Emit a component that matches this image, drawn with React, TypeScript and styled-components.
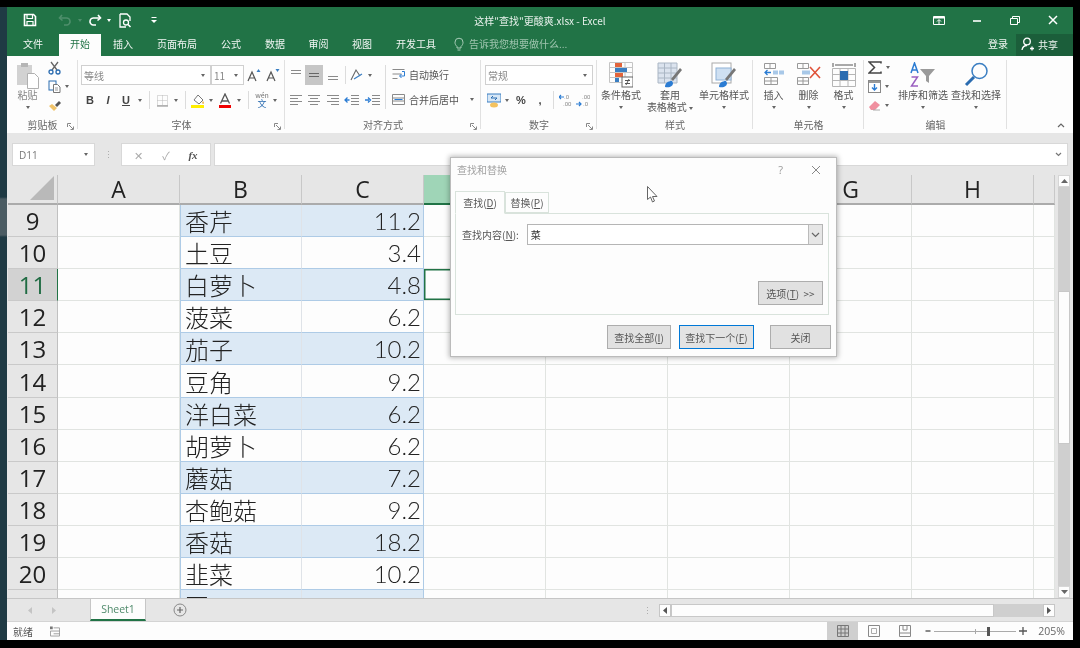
import { FC, ReactNode } from "react";
import styled, { createGlobalStyle } from "styled-components";

const FONT = `"Noto Sans CJK SC", "Liberation Sans", sans-serif`;
const LATIN = `"Open Sans", "Noto Sans CJK SC", sans-serif`;
const GREEN = "#217346";

const Global = createGlobalStyle`
  html, body { margin: 0; padding: 0; background: #000; }
  body { width: 1080px; height: 648px; overflow: hidden; font-family: ${FONT}; }
  * { box-sizing: border-box; }
`;

/* ---------- frame ---------- */
const Frame = styled.div`
  display: flex;
  width: 1080px;
  height: 648px;
  padding: 7px 7px 8px 0;
  background: #000;
`;
const LeftStrip = styled.div`
  width: 7px;
  background: linear-gradient(#1f3a44 0 190px, #4b5c63 192px 228px, #1f3a44 230px);
`;
const Excel = styled.div`
  position: relative;
  flex: 1;
  display: flex;
  flex-direction: column;
  background: #e6e6e6;
  overflow: hidden;
  filter: blur(0.3px);
`;

/* ---------- title bar ---------- */
const TitleBar = styled.div`
  height: 26px;
  flex: none;
  display: grid;
  grid-template-columns: 1fr auto 1fr;
  align-items: center;
  background: ${GREEN};
  color: #e8f1ec;
`;
const Qat = styled.div`
  display: flex;
  align-items: center;
  padding-left: 14px;
`;
const QatSlot = styled.div<{ $w: number }>`
  width: ${(p) => p.$w}px;
  display: flex;
  align-items: center;
  justify-content: center;
`;
const TitleText = styled.div`
  font-size: 10px;
`;
const WindowButtons = styled.div`
  display: flex;
  justify-content: flex-end;
  align-items: center;
  padding-right: 1px;
`;
const WinBtn = styled.div<{ $w: number }>`
  width: ${(p) => p.$w}px;
  display: flex;
  justify-content: center;
`;

/* ---------- tab bar ---------- */
const TabBar = styled.div`
  height: 23px;
  flex: none;
  display: flex;
  align-items: stretch;
  background: ${GREEN};
  padding-top: 1px;
`;
const RibbonTab = styled.div<{ $active?: boolean; $w: number }>`
  width: ${(p) => p.$w}px;
  padding-bottom: 3px;
  display: flex;
  align-items: center;
  justify-content: center;
  font-size: 10px;
  color: ${(p) => (p.$active ? GREEN : "#f1f6f3")};
  background: ${(p) => (p.$active ? "#fdfdfd" : "transparent")};
`;
const TellMe = styled.div`
  display: flex;
  align-items: center;
  gap: 5px;
  margin-left: 6px;
  padding-bottom: 3px;
  font-size: 10px;
  color: #9fc5af;
`;
const Spacer = styled.div`
  flex: 1;
`;
const Login = styled.div`
  display: flex;
  align-items: center;
  margin-right: 8px;
  padding-bottom: 3px;
  font-size: 10px;
  color: #f1f6f3;
`;
const Share = styled.div`
  width: 57px;
  display: flex;
  align-items: center;
  gap: 3px;
  padding: 0 0 2px 5px;
  font-size: 10px;
  color: #f1f6f3;
  background: #1b5e3a;
`;

/* ---------- ribbon ---------- */
const Ribbon = styled.div`
  position: relative;
  height: 77px;
  flex: none;
  display: flex;
  background: #fdfdfd;
  color: #555;
`;
const Group = styled.div<{ $w: number }>`
  position: relative;
  width: ${(p) => p.$w}px;
  flex: none;
  display: flex;
  flex-direction: column;
  &::after {
    content: "";
    position: absolute;
    right: 0;
    top: 4px;
    bottom: 4px;
    width: 1px;
    background: #e1e1e1;
  }
`;
const GroupBody = styled.div<{ $pl?: number; $col?: boolean }>`
  flex: 1;
  min-height: 0;
  display: flex;
  flex-direction: ${(p) => (p.$col ? "column" : "row")};
  padding: ${(p) => (p.$col ? "9px" : "6px")} 0 0 ${(p) => p.$pl ?? 0}px;
  ${(p) => p.$col && "gap: 5px;"}
`;
const GroupLabel = styled.div`
  height: 15px;
  flex: none;
  line-height: 13px;
  text-align: center;
  font-size: 10px;
  color: #666;
`;
const Launcher = styled.svg`
  position: absolute;
  right: 4px;
  bottom: 3px;
`;
const Row = styled.div`
  height: 20px;
  display: flex;
  align-items: center;
`;
const Slot = styled.div<{ $w?: number; $on?: boolean }>`
  width: ${(p) => p.$w ?? 18}px;
  height: 20px;
  flex: none;
  display: flex;
  align-items: center;
  justify-content: center;
  font-size: 10px;
  background: ${(p) => (p.$on ? "#c6c6c6" : "transparent")};
`;
const StyleLetter = styled.span<{ $i?: boolean; $u?: boolean }>`
  font-family: "Liberation Sans", sans-serif;
  font-size: 11px;
  font-weight: 700;
  font-style: ${(p) => (p.$i ? "italic" : "normal")};
  text-decoration: ${(p) => (p.$u ? "underline" : "none")};
  color: #444;
`;
const Sep = styled.div<{ $w: number }>`
  width: ${(p) => p.$w}px;
  height: 18px;
  flex: none;
  display: flex;
  justify-content: center;
  &::before {
    content: "";
    width: 1px;
    background: #dcdcdc;
  }
`;
const Combo = styled.div<{ $w: number }>`
  width: ${(p) => p.$w}px;
  height: 20px;
  flex: none;
  display: flex;
  align-items: center;
  justify-content: space-between;
  padding: 0 5px 0 2px;
  border: 1px solid #d0d0d0;
  font-size: 10px;
  color: #888;
  background: #fff;
`;
const Caret = styled.i<{ $c?: string }>`
  display: block;
  width: 0;
  height: 0;
  border: 2.5px solid transparent;
  border-top: 3px solid ${(p) => p.$c ?? "#666"};
  border-bottom: 0;
  flex: none;
`;
const InlineCaret = styled(Caret)`
  display: inline-block;
  vertical-align: middle;
`;
const CaretSlot = styled.div<{ $w?: number }>`
  width: ${(p) => p.$w ?? 8}px;
  flex: none;
  display: flex;
  justify-content: center;
`;
const SmallStack = styled.div<{ $w: number }>`
  width: ${(p) => p.$w}px;
  flex: none;
  margin-top: -4px;
  display: flex;
  flex-direction: column;
`;
const ClipItem = styled.div`
  height: 19px;
  display: flex;
  align-items: center;
  gap: 4px;
`;
const Big = styled.div<{ $w: number }>`
  width: ${(p) => p.$w}px;
  flex: none;
  display: flex;
  flex-direction: column;
  align-items: center;
  font-size: 10px;
  line-height: 12px;
  color: #555;
  white-space: nowrap;
`;
const BigIcon = styled.div`
  height: 27px;
  display: flex;
  align-items: flex-start;
  justify-content: center;
`;
const BigCaret = styled.div`
  height: 12px;
  display: flex;
  align-items: center;
`;
const PasteLabel = styled.span`
  color: #888;
`;
const LongBtn = styled.div`
  display: flex;
  align-items: center;
  gap: 4px;
  height: 20px;
  font-size: 10px;
  color: #555;
  white-space: nowrap;
`;
const AlignBody = styled.div`
  flex: 1;
  min-height: 0;
  display: flex;
  padding: 9px 0 0 2px;
`;
const AlignRight = styled.div`
  display: flex;
  flex-direction: column;
  gap: 5px;
  margin-top: -1px;
  padding-left: 6px;
`;
const AlignLeft = styled.div`
  display: flex;
  flex-direction: column;
  gap: 5px;
  width: 102px;
  border-right: 1px solid #dcdcdc;
  height: 44px;
`;
const Collapse = styled.svg`
  position: absolute;
  right: 8px;
  bottom: 5px;
`;

/* ---------- formula bar ---------- */
const FormulaBar = styled.div`
  height: 42px;
  flex: none;
  display: flex;
  align-items: flex-start;
  padding: 10px 5px 0 5px;
`;
const NameBox = styled.div`
  width: 83px;
  height: 23px;
  display: flex;
  align-items: center;
  justify-content: space-between;
  padding: 0 6px;
  background: #fff;
  border: 1px solid #d8d8d8;
  font-family: ${LATIN};
  font-size: 10px;
  color: #777;
`;
const Grip = styled.div`
  width: 26px;
  height: 23px;
  display: flex;
  align-items: center;
  justify-content: center;
  color: #aaa;
  font-size: 9px;
  line-height: 4px;
`;
const FxBox = styled.div`
  width: 90px;
  height: 23px;
  display: flex;
  align-items: center;
  justify-content: space-around;
  padding: 0 3px;
  margin-right: 3px;
  background: #fff;
  border: 1px solid #d8d8d8;
  color: #aaa;
  font-size: 11px;
`;
const FxText = styled.span`
  font-family: "Liberation Serif", serif;
  font-style: italic;
  font-weight: 700;
  color: #555;
`;
const FormulaInput = styled.div`
  flex: 1;
  height: 23px;
  display: flex;
  align-items: center;
  justify-content: flex-end;
  padding-right: 5px;
  background: #fff;
  border: 1px solid #d8d8d8;
`;

/* ---------- sheet ---------- */
const SheetArea = styled.div`
  flex: 1;
  min-height: 0;
  display: flex;
  padding-left: 1px;
`;
const SheetGrid = styled.div`
  width: 1047px;
  display: grid;
  grid-template-columns: 50px repeat(8, 122px) 21px;
  grid-template-rows: 30px;
  grid-auto-rows: 32.1px;
  overflow: hidden;
  align-content: start;
`;
const Corner = styled.div`
  display: flex;
  align-items: flex-end;
  justify-content: flex-end;
  padding: 0 3px 3px 0;
  background: #e6e6e6;
  border-right: 1px solid #c4c4c4;
  border-bottom: 2px solid #ababab;
`;
const ColHead = styled.div<{ $sel?: boolean }>`
  display: flex;
  align-items: center;
  justify-content: center;
  font-family: ${LATIN};
  font-size: 23px;
  color: #222;
  background: ${(p) => (p.$sel ? "#9fd5b7" : "#e6e6e6")};
  border-right: 1px solid #c8c8c8;
  border-bottom: 2px solid ${(p) => (p.$sel ? GREEN : "#ababab")};
`;
const RowHead = styled.div<{ $sel?: boolean }>`
  display: flex;
  align-items: center;
  justify-content: center;
  font-family: ${LATIN};
  font-size: 24px;
  color: ${(p) => (p.$sel ? "#1f6b42" : "#222")};
  background: ${(p) => (p.$sel ? "#d2d2d2" : "#e6e6e6")};
  border-bottom: 1px solid #c9c9c9;
  border-right: ${(p) => (p.$sel ? `1px solid ${GREEN}` : "1px solid #c0c0c0")};
`;
const Cell = styled.div<{ $blue?: boolean; $table?: boolean; $num?: boolean; $sel?: boolean }>`
  display: flex;
  align-items: center;
  justify-content: ${(p) => (p.$num ? "flex-end" : "flex-start")};
  padding: 0 2px 0 4px;
  font-family: ${(p) => (p.$num ? `"Lato", ${FONT}` : FONT)};
  font-size: 24px;
  font-weight: 300;
  color: #222;
  white-space: nowrap;
  background: ${(p) => (p.$blue ? "#dce9f5" : "#fdfdfd")};
  border-right: 1px solid ${(p) => (p.$num ? "#aecbe6" : p.$table ? "#dfe3e8" : "#e1e4e1")};
  border-bottom: 1px solid ${(p) => (p.$table ? "#aecbe6" : "#e1e4e1")};
  ${(p) => p.$table && !p.$num && "border-left: 1px solid #aecbe6;"}
  ${(p) => p.$sel && `box-shadow: inset 0 0 0 1.5px ${GREEN};`}
`;
const VScroll = styled.div`
  width: 18px;
  display: flex;
  flex-direction: column;
  padding: 0 3px;
`;
const ScrollBtn = styled.div`
  height: 12px;
  flex: none;
  display: flex;
  align-items: center;
  justify-content: center;
  background: #fdfdfd;
  border: 1px solid #d6d6d6;
`;
const ScrollTrack = styled.div<{ $h?: number }>`
  ${(p) => (p.$h ? `height: ${p.$h}px; flex: none;` : "flex: 1;")}
  background: #cfcfcf;
`;
const ScrollThumb = styled.div`
  height: 153px;
  flex: none;
  background: #fdfdfd;
  border: 1px solid #c8c8c8;
`;

/* ---------- bottom bars ---------- */
const SheetBar = styled.div`
  height: 24px;
  flex: none;
  display: flex;
  align-items: stretch;
  background: #e6e6e6;
  border-top: 1px solid #c6c6c6;
  border-bottom: 1px solid #d4d4d4;
`;
const SheetNav = styled.div`
  width: 83px;
  display: flex;
  align-items: center;
  padding-left: 21px;
  gap: 20px;
`;
const SheetTab = styled.div`
  width: 56px;
  margin-top: -1px;
  display: flex;
  align-items: center;
  justify-content: center;
  font-family: ${LATIN};
  font-size: 10.5px;
  color: #4f8a6b;
  background: #fdfdfd;
  border: 1px solid #c6c6c6;
  border-bottom: 2px solid ${GREEN};
`;
const AddSheet = styled.div`
  margin-left: 27px;
  display: flex;
  align-items: center;
`;
const HGrip = styled.div`
  margin-left: auto;
  width: 24px;
  display: flex;
  align-items: center;
  justify-content: center;
  font-size: 9px;
  color: #aaa;
`;
const HScroll = styled.div`
  width: 396px;
  margin-right: 18px;
  display: flex;
  align-items: center;
`;
const HBtn = styled.div`
  width: 12px;
  height: 13px;
  flex: none;
  display: flex;
  align-items: center;
  justify-content: center;
  background: #fdfdfd;
  border: 1px solid #c6c6c6;
`;
const HThumb = styled.div`
  width: 323px;
  height: 13px;
  flex: none;
  background: #fdfdfd;
  border: 1px solid #c8c8c8;
`;
const HTrack = styled.div`
  flex: 1;
  height: 13px;
  background: #cfcfcf;
`;
const StatusBar = styled.div`
  height: 18px;
  flex: none;
  display: flex;
  align-items: stretch;
  background: #fdfdfd;
  font-size: 10px;
  color: #555;
`;
const Ready = styled.div`
  width: 43px;
  padding-left: 6px;
  display: flex;
  align-items: center;
`;
const ViewBtn = styled.div<{ $on?: boolean; $w: number }>`
  width: ${(p) => p.$w}px;
  display: flex;
  align-items: center;
  justify-content: center;
  background: ${(p) => (p.$on ? "#cfcfcf" : "transparent")};
`;
const Zoom = styled.div`
  display: flex;
  align-items: center;
  gap: 3px;
  margin-left: 5px;
  color: #555;
`;
const Slider = styled.div`
  position: relative;
  width: 82px;
  height: 1px;
  background: #aaa;
`;
const SliderKnob = styled.div`
  position: absolute;
  left: 53px;
  top: -4px;
  width: 3px;
  height: 9px;
  background: #555;
`;
const SliderTick = styled.div`
  position: absolute;
  left: 41px;
  top: -2px;
  width: 1px;
  height: 5px;
  background: #aaa;
`;
const ZoomPct = styled.div`
  display: flex;
  align-items: center;
  margin: 0 8px 0 11px;
  font-family: ${LATIN};
  font-size: 10.5px;
  color: #666;
`;

/* ---------- dialog ---------- */
const Dialog = styled.div`
  position: absolute;
  left: 443px;
  top: 150px;
  width: 387px;
  height: 200px;
  display: flex;
  flex-direction: column;
  padding: 0 7px 8px 4px;
  background: #fdfdfd;
  border: 1px solid #bbb;
  box-shadow: 0 0 5px 1px rgba(0, 0, 0, 0.28);
  font-size: 10px;
  color: #555;
`;
const DialogHead = styled.div`
  height: 26px;
  flex: none;
  display: flex;
  align-items: center;
  padding: 0 8px 3px 2px;
  color: #a2a2a2;
`;
const Help = styled.div`
  margin-left: auto;
  margin-right: 28px;
  font-family: ${LATIN};
  font-size: 11px;
  color: #999;
`;
const DialogTabs = styled.div`
  height: 30px;
  flex: none;
  display: flex;
  align-items: flex-end;
  padding-top: 7px;
  margin-top: -1px;
`;
const DialogTab = styled.div<{ $on?: boolean }>`
  width: ${(p) => (p.$on ? 50 : 44)}px;
  height: ${(p) => (p.$on ? 23 : 21)}px;
  display: flex;
  align-items: center;
  justify-content: center;
  background: #fdfdfd;
  border: 1px solid #d9e3dc;
  border-bottom: ${(p) => (p.$on ? "1px solid #fdfdfd" : "1px solid #d9e3dc")};
  ${(p) => p.$on && "margin-bottom: -1px; position: relative;"}
`;
const Panel = styled.div`
  height: 102px;
  flex: none;
  display: flex;
  flex-direction: column;
  padding: 10px 5px 10px 6px;
  border: 1px solid #d9e3dc;
`;
const FindRow = styled.div`
  display: flex;
  align-items: center;
  gap: 8px;
`;
const FindInput = styled.div`
  flex: 1;
  height: 21px;
  display: flex;
  align-items: center;
  justify-content: space-between;
  padding-left: 3px;
  background: #fff;
  border: 1px solid #b5b5b5;
  color: #333;
`;
const Drop = styled.div`
  width: 14px;
  height: 100%;
  display: flex;
  align-items: center;
  justify-content: center;
  background: #e6e6e6;
  border-left: 1px solid #bbb;
`;
const DlgBtn = styled.div<{ $w: number; $primary?: boolean; $ml?: number }>`
  width: ${(p) => p.$w}px;
  height: 24px;
  flex: none;
  margin-left: ${(p) => p.$ml ?? 0}px;
  display: flex;
  align-items: center;
  justify-content: center;
  background: ${(p) => (p.$primary ? "#e3e3e3" : "#e1e1e1")};
  border: 1px solid ${(p) => (p.$primary ? "#0078d7" : "#adadad")};
`;
const OptionsRow = styled.div`
  margin-top: auto;
  display: flex;
  justify-content: flex-end;
  margin-bottom: -1px;
`;
const DialogFoot = styled.div`
  display: flex;
  margin-top: 10px;
  padding-left: 152px;
`;
const Pointer = styled.svg`
  position: absolute;
  left: 196px;
  top: 28px;
`;

/* ---------- icons ---------- */
type SvgP = { w: number; h: number; children: ReactNode };
const Svg: FC<SvgP> = ({ w, h, children }) => (
  <svg width={w} height={h} viewBox={`0 0 ${w} ${h}`} fill="none" style={{ display: "block" }}>
    {children}
  </svg>
);

// rows of horizontal bars used by all alignment icons
const Bars: FC<{ rows: [number, number, number][]; color?: string }> = ({ rows, color = "#8a8a8a" }) => (
  <Svg w={14} h={14}>
    {rows.map(([a, b, y], i) => (
      <path key={i} d={`M${a} ${y + 0.5}H${b}`} stroke={color} />
    ))}
  </Svg>
);

const Save = () => (
  <Svg w={14} h={14}>
    <path d="M1.5 1.5h9l2 2v9h-11z" stroke="#fff" strokeWidth="1.6" />
    <path d="M4 2v3.5h5.5V2M4 12.5V8.5h6v4" stroke="#fff" strokeWidth="1.2" />
  </Svg>
);
const UndoIcon: FC<{ c: string; flip?: boolean }> = ({ c, flip }) => (
  <svg width="14" height="12" viewBox="0 0 14 12" fill="none" style={{ transform: flip ? "scaleX(-1)" : undefined }}>
    <path d="M4 1L1.5 4 4.5 6.5" stroke={c} strokeWidth="1.6" />
    <path d="M2 4h6a3.5 3.5 0 0 1 1 7H6" stroke={c} strokeWidth="1.6" />
  </svg>
);
const Preview = () => (
  <Svg w={14} h={15}>
    <path d="M2 1h7l3 3v4M2 1v13h6" stroke="#fff" strokeWidth="1.3" />
    <circle cx="8" cy="9.5" r="2.5" stroke="#fff" strokeWidth="1.3" />
    <path d="M10 11.5l2.5 2.5" stroke="#fff" strokeWidth="1.6" />
  </Svg>
);
const QatMore = () => (
  <Svg w={8} h={8}>
    <path d="M1.5 1.5h5" stroke="#fff" />
    <path d="M1 4h6L4 7z" fill="#fff" />
  </Svg>
);
const Lightbulb = () => (
  <Svg w={10} h={14}>
    <path d="M3 9.5C1.5 8 1 7 1 5.2a4 4 0 0 1 8 0C9 7 8.5 8 7 9.5V11H3z" stroke="#a9cdb8" />
    <path d="M3.5 13h3" stroke="#a9cdb8" />
  </Svg>
);
const Person = () => (
  <Svg w={14} h={14}>
    <circle cx="6" cy="4.5" r="3.3" stroke="#fff" strokeWidth="1.3" />
    <path d="M1 13c.5-3 2-4.5 5-4.5M9 11.5h4M11 9.5v4" stroke="#fff" strokeWidth="1.3" />
  </Svg>
);
const Paste = () => (
  <Svg w={24} h={27}>
    <rect x="1" y="3" width="15" height="20" fill="#d2d2d2" />
    <rect x="5" y="1" width="7" height="4" fill="#b5b5b5" />
    <path d="M11.5 11.5h7l4 4v11h-11z" fill="#fff" stroke="#b0b0b0" />
  </Svg>
);
const Cut = () => (
  <Svg w={13} h={14}>
    <path d="M3 1l6 8M10 1L4 9" stroke="#666" strokeWidth="1.3" />
    <circle cx="3" cy="11" r="2" stroke="#2b6cb0" strokeWidth="1.3" />
    <circle cx="10" cy="11" r="2" stroke="#2b6cb0" strokeWidth="1.3" />
  </Svg>
);
const CopyIcon = () => (
  <Svg w={13} h={13}>
    <rect x="1" y="1" width="7" height="9" stroke="#2b6cb0" />
    <path d="M5.5 4.5h4l2.5 2.5v5.5h-6.5z" fill="#fff" stroke="#777" />
    <path d="M7 8h3M7 10h3" stroke="#999" />
  </Svg>
);
const Painter = () => (
  <Svg w={14} h={13}>
    <path d="M1 7l5 5 3-3-5-4z" fill="#f0c36a" />
    <path d="M7 6l4-4 2 2-4 4z" fill="#555" />
  </Svg>
);
const GrowA: FC<{ up?: boolean }> = ({ up }) => (
  <Svg w={14} h={14}>
    <path d="M1 13L5 4l4 9M2.8 10h4.5" stroke="#555" strokeWidth="1.2" />
    <path d={up ? "M9.5 4l2-3 2 3z" : "M9.5 1l2 3 2-3z"} fill="#3a7ec2" />
  </Svg>
);
const BorderIcon = () => (
  <Svg w={13} h={13}>
    <path d="M1.5 1.5h10v10h-10zM6.5 1.5v10M1.5 6.5h10" stroke="#bbb" strokeDasharray="1 1" />
    <path d="M1 12h11" stroke="#888" />
  </Svg>
);
const FillIcon = () => (
  <Svg w={14} h={15}>
    <path d="M3 7l4-5 5 5-4 4z" fill="#fff" stroke="#777" />
    <path d="M12 8c1 1.5 1.5 2.5 0 3-1-.5-1-1.5 0-3z" fill="#e6a93c" />
    <rect x="0" y="12" width="13" height="3" fill="#ffee00" />
  </Svg>
);
const FontColor = () => (
  <Svg w={14} h={15}>
    <path d="M2.5 10.5L7 1l4.5 9.5M4 8h6" stroke="#555" strokeWidth="1.3" />
    <rect x="1" y="12" width="12" height="3" fill="#f00000" />
  </Svg>
);
const OrientIcon = () => (
  <Svg w={14} h={14}>
    <path d="M1 12L6 2l4 6" stroke="#666" strokeWidth="1.1" />
    <path d="M4 11l8-5" stroke="#3a7ec2" strokeWidth="1.2" />
  </Svg>
);
const IndentIcon: FC<{ inc?: boolean }> = ({ inc }) => (
  <Svg w={15} h={12}>
    <path d="M7 1.5h8M7 4.5h8M7 7.5h8M7 10.5h8" stroke="#8a8a8a" />
    <path d={inc ? "M0 6h4M3 3.5L5.5 6 3 8.5" : "M5.5 6h-4M3.5 3.5L1 6l2.5 2.5"} stroke="#2b7cd3" strokeWidth="1.3" />
  </Svg>
);
const WrapIcon = () => (
  <Svg w={13} h={13}>
    <path d="M.5 1.5h12M.5 6h9M.5 10.5h5" stroke="#8a8a8a" />
    <path d="M10 3.5h2.5V8H8M9.5 6L7.5 8l2 2" stroke="#2b7cd3" />
  </Svg>
);
const MergeIcon = () => (
  <Svg w={13} h={13}>
    <path d="M.5 1.5h12v10H.5zM.5 5h12M.5 8h12" stroke="#8a8a8a" />
    <path d="M2.5 6.5h8" stroke="#2b7cd3" />
  </Svg>
);
const Currency = () => (
  <Svg w={14} h={15}>
    <rect x="0" y="1" width="14" height="8" fill="#d7e7f6" stroke="#3a7ec2" />
    <path d="M4 5h6M4 5l2-2M10 5L8 7" stroke="#2b6cb0" />
    <ellipse cx="7" cy="12" rx="4" ry="2.5" fill="#f4c25f" />
  </Svg>
);
const DecimalIcon: FC<{ inc?: boolean }> = ({ inc }) => (
  <Svg w={14} h={14}>
    <path d={inc ? "M0 4h5M2 2L0 4l2 2" : "M0 11h5M3 9l2 2-2 2"} stroke="#2b7cd3" strokeWidth="1.2" />
    <text x={inc ? 5 : 6} y="6" fontSize="6" fill="#888" fontFamily="Liberation Sans">
      {inc ? ".0" : ".00"}
    </text>
    <text x={inc ? 4 : 7} y="13" fontSize="6" fill="#888" fontFamily="Liberation Sans">
      {inc ? ".00" : ".0"}
    </text>
  </Svg>
);
const CondFormat = () => (
  <Svg w={24} h={26}>
    <path d="M.5.5h23v20H.5zM8 .5v20M16 .5v20M.5 5.5h23M.5 10.5h23M.5 15.5h23" stroke="#c4c4c4" />
    <rect x="6" y="1" width="7" height="4" fill="#e2643b" />
    <rect x="6" y="6" width="12" height="4" fill="#3a7ec2" />
    <rect x="6" y="11" width="8" height="4" fill="#e2643b" />
    <rect x="6" y="16" width="4" height="4" fill="#3a7ec2" />
    <rect x="13" y="15" width="11" height="10" fill="#fff" stroke="#666" />
    <path d="M16 18.5h5M16 21.5h5M20 17l-3 6" stroke="#555" />
  </Svg>
);
const TableFormat = () => (
  <Svg w={26} h={26}>
    <rect x="1" y="1" width="19" height="20" fill="#dbe3ee" />
    <path d="M1 1h19v20H1zM7.5 1v20M14 1v20M1 6h19M1 11h19M1 16h19" stroke="#aab6c4" />
    <path d="M14 17l9-11 2 2-9 11z" fill="#777" />
    <path d="M8 25c0-4 3-6 7-6l1 2c0 3-3 5-8 4z" fill="#2b7cd3" />
  </Svg>
);
const CellStyle = () => (
  <Svg w={26} h={26}>
    <rect x="1" y="1" width="19" height="20" fill="#fff" stroke="#aaa" />
    <rect x="5" y="6" width="15" height="12" fill="#cfe0f2" stroke="#8fb2d6" />
    <path d="M14 17l9-11 2 2-9 11z" fill="#777" />
    <path d="M8 25c0-4 3-6 7-6l1 2c0 3-3 5-8 4z" fill="#2b7cd3" />
  </Svg>
);
const InsertCells = () => (
  <Svg w={24} h={24}>
    <path d="M2.5 1.5h11v5h-11zM8 1.5v5M2.5 15.5h13v7h-13zM9 15.5v7M2.5 19h13" stroke="#999" />
    <rect x="11" y="8.5" width="5" height="4" fill="#a8c8e8" />
    <rect x="17" y="8.5" width="5" height="4" fill="#a8c8e8" />
    <path d="M9 10.5H3M5.5 8L3 10.5 5.5 13" stroke="#2b7cd3" strokeWidth="1.3" />
  </Svg>
);
const DeleteCells = () => (
  <Svg w={26} h={24}>
    <path d="M1.5 1.5h11v5h-11zM7 1.5v5M1.5 15.5h11v7h-11zM7 15.5v7M1.5 19h11" stroke="#999" />
    <rect x="6" y="8.5" width="8" height="4" fill="#a8c8e8" />
    <path d="M14 5l10 11M24 5L14 16" stroke="#e0533a" strokeWidth="1.6" />
  </Svg>
);
const FormatCells = () => (
  <Svg w={24} h={26}>
    <path d="M1 1v4M23 1v4M3 3h18" stroke="#555" />
    <path d="M.5 6.5h23v18H.5zM8 6.5v18M16 6.5v18M.5 12.5h23M.5 18.5h23" stroke="#b5b5b5" />
    <rect x="8" y="9" width="8" height="9" fill="#2b6cb0" />
  </Svg>
);
const Sigma = () => (
  <Svg w={14} h={13}>
    <path d="M13 2.5V1H1l5.5 5.5L1 12h12v-1.5" stroke="#444" strokeWidth="1.5" />
  </Svg>
);
const FillDown = () => (
  <Svg w={13} h={13}>
    <rect x=".5" y=".5" width="12" height="12" fill="#fff" stroke="#888" />
    <rect x="1" y="1" width="11" height="2" fill="#999" />
    <path d="M6.5 4v6M4 7.5l2.5 2.5L9 7.5" stroke="#2b7cd3" strokeWidth="1.4" />
  </Svg>
);
const Eraser = () => (
  <Svg w={13} h={11}>
    <path d="M1 7l6-6 5 4-5 5H3z" fill="#f08f9f" />
    <path d="M5 10h7" stroke="#aaa" />
  </Svg>
);
const SortFilter = () => (
  <Svg w={26} h={26}>
    <path d="M1 11L4.5 1 8 11M2 8h5" stroke="#2b7cd3" strokeWidth="1.5" />
    <path d="M1.5 15h6l-6 9h6.5" stroke="#9a5fc0" strokeWidth="1.5" />
    <path d="M10 7h15l-6 7v7l-3-2v-5z" fill="#9a9a9a" />
  </Svg>
);
const Magnifier = () => (
  <Svg w={26} h={26}>
    <circle cx="16.5" cy="9" r="7.5" stroke="#3a7ec2" strokeWidth="1.5" />
    <path d="M11 15l-8 8" stroke="#2b6cb0" strokeWidth="3" />
  </Svg>
);
const LauncherIcon = () => (
  <Launcher width="7" height="7" viewBox="0 0 7 7" fill="none">
    <path d="M.5 4V.5H4M2 2l4 4M6.5 3.5v3h-3" stroke="#888" />
  </Launcher>
);

/* ---------- ribbon groups ---------- */
const BigButton: FC<{ w: number; icon: ReactNode; lines: ReactNode[]; noCaret?: boolean }> = ({ w, icon, lines, noCaret }) => (
  <Big $w={w}>
    <BigIcon>{icon}</BigIcon>
    {lines.map((l, i) => (
      <div key={i}>{l}</div>
    ))}
    {!noCaret && (
      <BigCaret>
        <Caret />
      </BigCaret>
    )}
  </Big>
);

const WenStack = styled.div`
  display: flex;
  flex-direction: column;
  align-items: center;
  font-size: 7px;
  line-height: 7px;
  color: #777;
`;
const WenChar = styled.span`
  font-size: 9px;
  line-height: 9px;
  color: #2b6cb0;
`;
const WenIcon = () => (
  <WenStack>
    wén
    <WenChar>文</WenChar>
  </WenStack>
);

const ClipboardGroup = () => (
  <Group $w={71}>
    <GroupBody>
      <BigButton w={41} icon={<Paste />} lines={[<PasteLabel>粘贴</PasteLabel>]} />
      <SmallStack $w={28}>
        <ClipItem>
          <Cut />
        </ClipItem>
        <ClipItem>
          <CopyIcon />
          <Caret />
        </ClipItem>
        <ClipItem>
          <Painter />
        </ClipItem>
      </SmallStack>
    </GroupBody>
    <GroupLabel>剪贴板</GroupLabel>
    <LauncherIcon />
  </Group>
);

const FontGroup = () => (
  <Group $w={207}>
    <GroupBody $col $pl={3}>
      <Row>
        <Combo $w={130}>
          等线
          <Caret />
        </Combo>
        <Combo $w={33}>
          11
          <Caret />
        </Combo>
        <Slot $w={19}>
          <GrowA up />
        </Slot>
        <Slot $w={19}>
          <GrowA />
        </Slot>
      </Row>
      <Row>
        <Slot>
          <StyleLetter>B</StyleLetter>
        </Slot>
        <Slot>
          <StyleLetter $i>I</StyleLetter>
        </Slot>
        <Slot>
          <StyleLetter $u>U</StyleLetter>
        </Slot>
        <CaretSlot $w={10}>
          <Caret />
        </CaretSlot>
        <Sep $w={8} />
        <Slot>
          <BorderIcon />
        </Slot>
        <CaretSlot $w={10}>
          <Caret />
        </CaretSlot>
        <Sep $w={8} />
        <Slot>
          <FillIcon />
        </Slot>
        <CaretSlot $w={8}>
          <Caret />
        </CaretSlot>
        <Slot $w={20}>
          <FontColor />
        </Slot>
        <CaretSlot $w={8}>
          <Caret />
        </CaretSlot>
        <Sep $w={10} />
        <Slot>
          <WenIcon />
        </Slot>
        <CaretSlot $w={8}>
          <Caret />
        </CaretSlot>
      </Row>
    </GroupBody>
    <GroupLabel>字体</GroupLabel>
    <LauncherIcon />
  </Group>
);

const AlignGroup = () => (
  <Group $w={196}>
    <AlignBody>
      <AlignLeft>
        <Row>
          <Slot>
            <Bars rows={[[2, 12, 2], [2, 12, 5]]} />
          </Slot>
          <Slot $on>
            <Bars rows={[[2, 12, 5], [2, 12, 8]]} color="#666" />
          </Slot>
          <Slot $w={19}>
            <Bars rows={[[2, 12, 8], [2, 12, 11]]} />
          </Slot>
          <Sep $w={6} />
          <Slot>
            <OrientIcon />
          </Slot>
          <CaretSlot>
            <Caret />
          </CaretSlot>
        </Row>
        <Row>
          <Slot>
            <Bars rows={[[1, 13, 2], [1, 9, 5], [1, 13, 8], [1, 9, 11]]} />
          </Slot>
          <Slot>
            <Bars rows={[[1, 13, 2], [3, 11, 5], [1, 13, 8], [3, 11, 11]]} />
          </Slot>
          <Slot $w={19}>
            <Bars rows={[[1, 13, 2], [5, 13, 5], [1, 13, 8], [5, 13, 11]]} />
          </Slot>
          <Slot>
            <IndentIcon />
          </Slot>
          <Slot $w={24}>
            <IndentIcon inc />
          </Slot>
        </Row>
      </AlignLeft>
      <AlignRight>
        <LongBtn>
          <WrapIcon />
          自动换行
        </LongBtn>
        <LongBtn>
          <MergeIcon />
          合并后居中
          <CaretSlot $w={18}>
            <Caret />
          </CaretSlot>
        </LongBtn>
      </AlignRight>
    </AlignBody>
    <GroupLabel>对齐方式</GroupLabel>
    <LauncherIcon />
  </Group>
);

const NumberGroup = () => (
  <Group $w={116}>
    <GroupBody $col $pl={4}>
      <Row>
        <Combo $w={108}>
          常规
          <Caret />
        </Combo>
      </Row>
      <Row>
        <Slot>
          <Currency />
        </Slot>
        <CaretSlot>
          <Caret />
        </CaretSlot>
        <Slot $w={20}>
          <StyleLetter>%</StyleLetter>
        </Slot>
        <Slot>
          <StyleLetter>,</StyleLetter>
        </Slot>
        <Sep $w={8} />
        <Slot $w={17}>
          <DecimalIcon inc />
        </Slot>
        <Slot $w={17}>
          <DecimalIcon />
        </Slot>
      </Row>
    </GroupBody>
    <GroupLabel>数字</GroupLabel>
    <LauncherIcon />
  </Group>
);

const StylesGroup = () => (
  <Group $w={156}>
    <GroupBody $pl={3}>
      <BigButton w={42} icon={<CondFormat />} lines={["条件格式"]} />
      <BigButton
        w={56}
        icon={<TableFormat />}
        lines={[
          "套用",
          <>
            表格格式 <InlineCaret />
          </>,
        ]}
        noCaret
      />
      <BigButton w={52} icon={<CellStyle />} lines={["单元格样式"]} />
    </GroupBody>
    <GroupLabel>样式</GroupLabel>
  </Group>
);

const CellsGroup = () => (
  <Group $w={111}>
    <GroupBody $pl={3}>
      <BigButton w={35} icon={<InsertCells />} lines={["插入"]} />
      <BigButton w={35} icon={<DeleteCells />} lines={["删除"]} />
      <BigButton w={35} icon={<FormatCells />} lines={["格式"]} />
    </GroupBody>
    <GroupLabel>单元格</GroupLabel>
  </Group>
);

const EditGroup = () => (
  <Group $w={143}>
    <GroupBody $pl={4}>
      <SmallStack $w={29}>
        <ClipItem>
          <Sigma />
          <Caret />
        </ClipItem>
        <ClipItem>
          <FillDown />
          <Caret />
        </ClipItem>
        <ClipItem>
          <Eraser />
          <Caret />
        </ClipItem>
      </SmallStack>
      <BigButton w={52} icon={<SortFilter />} lines={["排序和筛选"]} />
      <BigButton w={54} icon={<Magnifier />} lines={["查找和选择"]} />
    </GroupBody>
    <GroupLabel>编辑</GroupLabel>
  </Group>
);

/* ---------- data ---------- */
const rows: [number, string, string][] = [
  [9, "香芹", "11.2"],
  [10, "土豆", "3.4"],
  [11, "白萝卜", "4.8"],
  [12, "菠菜", "6.2"],
  [13, "茄子", "10.2"],
  [14, "豆角", "9.2"],
  [15, "洋白菜", "6.2"],
  [16, "胡萝卜", "6.2"],
  [17, "蘑菇", "7.2"],
  [18, "杏鲍菇", "9.2"],
  [19, "香菇", "18.2"],
  [20, "韭菜", "10.2"],
  [21, "豆", ""],
];
const columns = ["A", "B", "C", "D", "E", "F", "G", "H"];
const restCols = ["E", "F", "G", "H"];

export default function App() {
  return (
    <>
      <Global />
      <Frame>
        <LeftStrip />
        <Excel>
          <TitleBar>
            <Qat>
              <QatSlot $w={18}>
                <Save />
              </QatSlot>
              <QatSlot $w={17} />
              <QatSlot $w={18}>
                <UndoIcon c="#4f8f6c" />
              </QatSlot>
              <QatSlot $w={12}>
                <Caret $c="#4f8f6c" />
              </QatSlot>
              <QatSlot $w={18}>
                <UndoIcon c="#fff" flip />
              </QatSlot>
              <QatSlot $w={10}>
                <Caret $c="#fff" />
              </QatSlot>
              <QatSlot $w={22}>
                <Preview />
              </QatSlot>
              <QatSlot $w={36}>
                <QatMore />
              </QatSlot>
            </Qat>
            <TitleText>这样"查找"更酸爽.xlsx - Excel</TitleText>
            <WindowButtons>
              <WinBtn $w={38}>
                <Svg w={12} h={9}>
                  <path d="M.5.5h11v8H.5z" stroke="#fff" />
                  <path d="M1 1h10v1.5H1z" fill="#fff" />
                  <path d="M6 8V4M4 5.5L6 3.5l2 2" stroke="#fff" />
                </Svg>
              </WinBtn>
              <WinBtn $w={38}>
                <Svg w={10} h={9}>
                  <path d="M1 5h8" stroke="#fff" strokeWidth="1.6" />
                </Svg>
              </WinBtn>
              <WinBtn $w={38}>
                <Svg w={10} h={9}>
                  <path d="M.5 2.5h7v6h-7zM2.5 2.5v-2h7v6h-2" stroke="#fff" />
                </Svg>
              </WinBtn>
              <WinBtn $w={38}>
                <Svg w={10} h={10}>
                  <path d="M1 1l8 8M9 1L1 9" stroke="#fff" strokeWidth="1.5" />
                </Svg>
              </WinBtn>
            </WindowButtons>
          </TitleBar>

          <TabBar>
            <RibbonTab $w={52}>文件</RibbonTab>
            <RibbonTab $active $w={42}>开始</RibbonTab>
            <RibbonTab $w={44}>插入</RibbonTab>
            <RibbonTab $w={64}>页面布局</RibbonTab>
            <RibbonTab $w={44}>公式</RibbonTab>
            <RibbonTab $w={44}>数据</RibbonTab>
            <RibbonTab $w={43}>审阅</RibbonTab>
            <RibbonTab $w={44}>视图</RibbonTab>
            <RibbonTab $w={64}>开发工具</RibbonTab>
            <TellMe>
              <Lightbulb />
              告诉我您想要做什么...
            </TellMe>
            <Spacer />
            <Login>登录</Login>
            <Share>
              <Person />
              共享
            </Share>
          </TabBar>

          <Ribbon>
            <ClipboardGroup />
            <FontGroup />
            <AlignGroup />
            <NumberGroup />
            <StylesGroup />
            <CellsGroup />
            <EditGroup />
            <Collapse width="8" height="5" viewBox="0 0 8 5" fill="none">
              <path d="M1 4l3-3 3 3" stroke="#666" strokeWidth="1.2" />
            </Collapse>
          </Ribbon>

          <FormulaBar>
            <NameBox>
              D11
              <Caret />
            </NameBox>
            <Grip>⋮</Grip>
            <FxBox>
              <span>✕</span>
              <span>✓</span>
              <FxText>fx</FxText>
            </FxBox>
            <FormulaInput>
              <Svg w={7} h={5}>
                <path d="M1 1l2.5 2.5L6 1" stroke="#777" strokeWidth="1.2" />
              </Svg>
            </FormulaInput>
          </FormulaBar>

          <SheetArea>
            <SheetGrid>
              <Corner>
                <Svg w={24} h={24}>
                  <path d="M24 0v24H0z" fill="#b9b9b9" />
                </Svg>
              </Corner>
              {columns.map((c) => (
                <ColHead key={c} $sel={c === "D"}>
                  {c}
                </ColHead>
              ))}
              <ColHead />
              {rows.map(([n, name, value]) => {
                const blue = n % 2 === 1;
                return [
                  <RowHead key={`h${n}`} $sel={n === 11}>
                    {n}
                  </RowHead>,
                  <Cell key={`a${n}`} />,
                  <Cell key={`b${n}`} $table $blue={blue}>
                    {name}
                  </Cell>,
                  <Cell key={`c${n}`} $table $blue={blue} $num>
                    {value}
                  </Cell>,
                  <Cell key={`d${n}`} $sel={n === 11} />,
                  ...restCols.map((c) => <Cell key={`${c}${n}`} />),
                  <Cell key={`z${n}`} />,
                ];
              })}
            </SheetGrid>
            <VScroll>
              <ScrollBtn>
                <Svg w={7} h={4}>
                  <path d="M0 4l3.5-4L7 4z" fill="#666" />
                </Svg>
              </ScrollBtn>
              <ScrollTrack $h={104} />
              <ScrollThumb />
              <ScrollTrack />
              <ScrollBtn>
                <Svg w={7} h={4}>
                  <path d="M0 0l3.5 4L7 0z" fill="#666" />
                </Svg>
              </ScrollBtn>
            </VScroll>
          </SheetArea>

          <SheetBar>
            <SheetNav>
              <Svg w={4} h={7}>
                <path d="M4 0v7L0 3.5z" fill="#c4c4c4" />
              </Svg>
              <Svg w={4} h={7}>
                <path d="M0 0v7l4-3.5z" fill="#c4c4c4" />
              </Svg>
            </SheetNav>
            <SheetTab>Sheet1</SheetTab>
            <AddSheet>
              <Svg w={14} h={14}>
                <circle cx="7" cy="7" r="6" stroke="#888" />
                <path d="M4 7h6M7 4v6" stroke="#666" strokeWidth="1.2" />
              </Svg>
            </AddSheet>
            <HGrip>⋮</HGrip>
            <HScroll>
              <HBtn>
                <Svg w={4} h={7}>
                  <path d="M4 0v7L0 3.5z" fill="#555" />
                </Svg>
              </HBtn>
              <HThumb />
              <HTrack />
              <HBtn>
                <Svg w={4} h={7}>
                  <path d="M0 0v7l4-3.5z" fill="#555" />
                </Svg>
              </HBtn>
            </HScroll>
          </SheetBar>

          <StatusBar>
            <Ready>就绪</Ready>
            <ViewBtn $w={10}>
              <Svg w={11} h={11}>
                <rect x="0" y="0" width="3" height="3" fill="#777" />
                <path d="M4 1.5h6.5v9H.5V5h10M4 8h6.5" stroke="#999" />
              </Svg>
            </ViewBtn>
            <Spacer />
            <ViewBtn $on $w={31}>
              <Svg w={12} h={12}>
                <path d="M.5.5h11v11H.5zM4 .5v11M8 .5v11M.5 4h11M.5 8h11" stroke="#777" />
              </Svg>
            </ViewBtn>
            <ViewBtn $w={31}>
              <Svg w={12} h={12}>
                <path d="M.5.5h11v11H.5z" stroke="#888" />
                <path d="M3.5 3.5h5v5h-5z" stroke="#aaa" />
              </Svg>
            </ViewBtn>
            <ViewBtn $w={31}>
              <Svg w={12} h={12}>
                <path d="M.5.5h11v11H.5zM.5 8h11M4 .5V5h4V.5" stroke="#888" />
              </Svg>
            </ViewBtn>
            <Zoom>
              <Svg w={6} h={6}>
                <path d="M.5 3h5" stroke="#555" strokeWidth="1.4" />
              </Svg>
              <Slider>
                <SliderTick />
                <SliderKnob />
              </Slider>
              <Svg w={8} h={8}>
                <path d="M0 4h8M4 0v8" stroke="#555" strokeWidth="1.3" />
              </Svg>
            </Zoom>
            <ZoomPct>205%</ZoomPct>
          </StatusBar>

          <Dialog>
            <DialogHead>
              查找和替换
              <Help>?</Help>
              <Svg w={10} h={10}>
                <path d="M1 1l8 8M9 1L1 9" stroke="#888" />
              </Svg>
            </DialogHead>
            <DialogTabs>
              <DialogTab $on>
                <span>
                  查找(<u>D</u>)
                </span>
              </DialogTab>
              <DialogTab>
                <span>
                  替换(<u>P</u>)
                </span>
              </DialogTab>
            </DialogTabs>
            <Panel>
              <FindRow>
                <span>
                  查找内容(<u>N</u>):
                </span>
                <FindInput>
                  菜
                  <Drop>
                    <Svg w={9} h={6}>
                      <path d="M1 1l3.5 3.5L8 1" stroke="#666" strokeWidth="1.2" />
                    </Svg>
                  </Drop>
                </FindInput>
              </FindRow>
              <OptionsRow>
                <DlgBtn $w={65}>
                  选项(<u>T</u>)&nbsp;&nbsp;&gt;&gt;
                </DlgBtn>
              </OptionsRow>
            </Panel>
            <DialogFoot>
              <DlgBtn $w={64}>
                查找全部(<u>I</u>)
              </DlgBtn>
              <DlgBtn $w={75} $primary $ml={8}>
                查找下一个(<u>F</u>)
              </DlgBtn>
              <DlgBtn $w={61} $ml={16}>
                关闭
              </DlgBtn>
            </DialogFoot>
            <Pointer width="11" height="17" viewBox="0 0 11 17" fill="none">
              <path d="M.5.5v13l3-2.5 2 5 2-1-2-4.5h4.5z" fill="#fff" stroke="#666" />
            </Pointer>
          </Dialog>
        </Excel>
      </Frame>
    </>
  );
}
